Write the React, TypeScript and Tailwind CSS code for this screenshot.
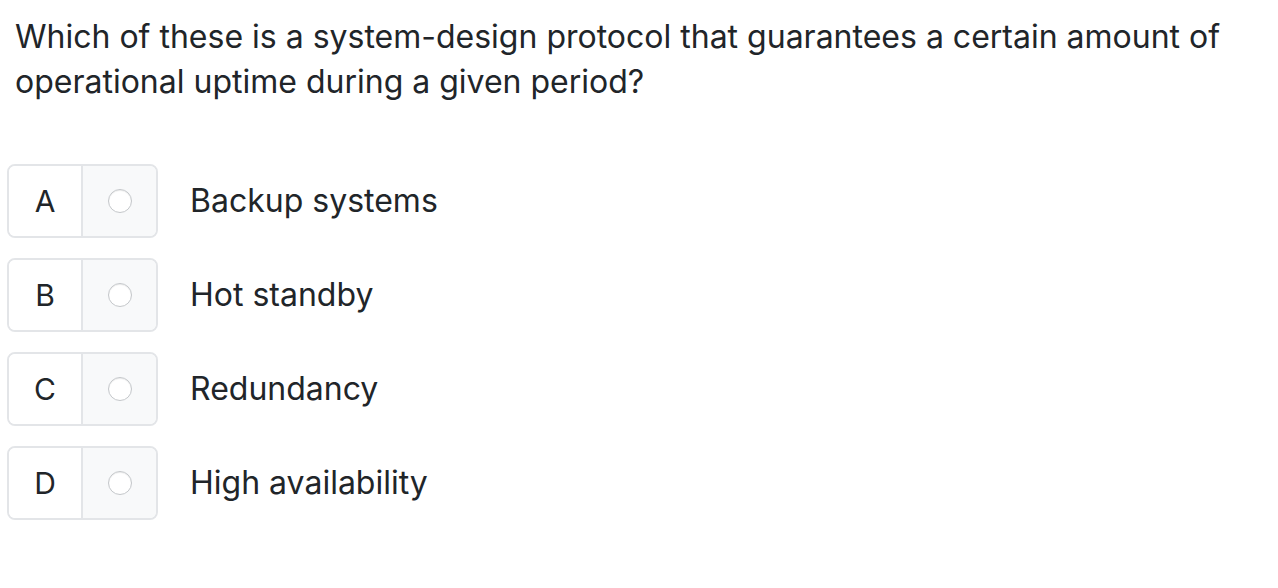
const options = [
  { key: "A", label: "Backup systems" },
  { key: "B", label: "Hot standby" },
  { key: "C", label: "Redundancy" },
  { key: "D", label: "High availability" },
]

export default function App() {
  return (
    <div className="min-h-screen bg-white px-[15px] pt-[14px] text-[#212529]" style={{ fontFamily: "Inter, 'Noto Sans', sans-serif" }}>
      <h1 className="text-[32px] font-normal leading-[45px]">
        Which of these is a system-design protocol that guarantees a certain amount of operational uptime during a given period?
      </h1>
      <div className="mt-[60px] flex flex-col gap-[20px]">
        {options.map((o) => (
          <div key={o.key} className="-ml-[8px] flex items-center">
            <div className="flex h-[74px] w-[151px] overflow-hidden rounded-[8px] border-2 border-[#e3e5e8]">
              <div className="flex w-[74px] items-center justify-center border-r-2 border-[#e3e5e8] bg-white text-[30px]">
                {o.key}
              </div>
              <div className="flex flex-1 items-center justify-center bg-[#f8f9fa]">
                <span className="block h-[24px] w-[24px] rounded-full border border-[#c4c7ca] bg-white shadow-[inset_0_1px_1px_rgba(0,0,0,0.08)]" />
              </div>
            </div>
            <div className="ml-[32px] text-[32px] leading-none">{o.label}</div>
          </div>
        ))}
      </div>
    </div>
  )
}
